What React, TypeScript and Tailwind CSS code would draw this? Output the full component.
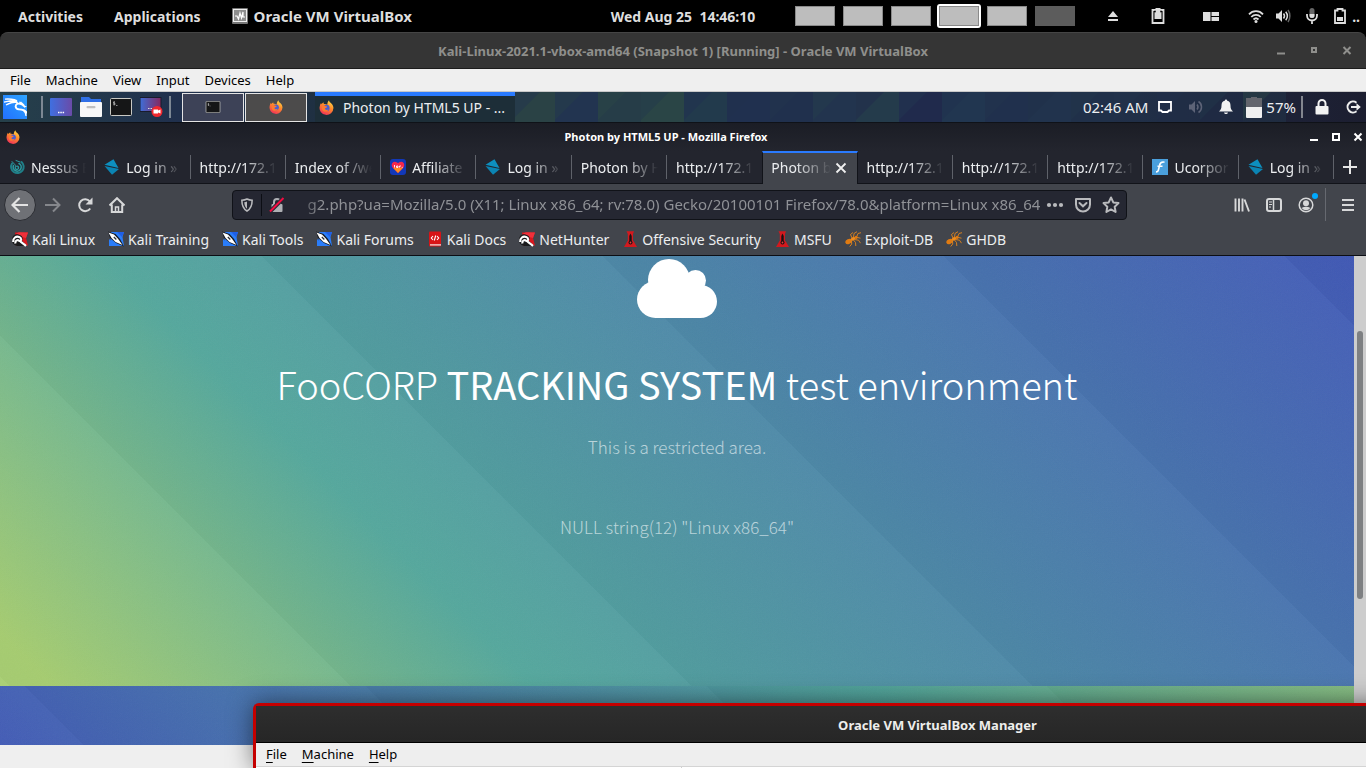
import React from "react";
import { SiKalilinux } from "react-icons/si";

type P = { className?: string };

const Firefox = ({ className = "" }: P) => (
  <svg viewBox="0 0 16 16" className={className} aria-hidden="true">
    <defs>
      <linearGradient id="ffBody" x1="0.8" y1="0" x2="0.3" y2="1">
        <stop offset="0" stopColor="#ffe14a" />
        <stop offset="0.45" stopColor="#ff8a2a" />
        <stop offset="1" stopColor="#f0305a" />
      </linearGradient>
    </defs>
    <path
      d="M15.4 8.6a7.4 7.4 0 1 1-14.6-1.8c.1-1.5.6-2.7 1.4-3.6l.5 1.4C3.4 3.5 4.200 2.800 5 2.500c-.2.6-.1 1.300.3 1.800 1.400-.1 2.600.1 3.500.8.2-1.800.5-3.600 1.900-4.900.2 1.500 1 2.100 2.200 3.200 1.600 1.400 2.500 3.200 2.500 5.200z"
      fill="url(#ffBody)"
    />
    <circle cx="7.900" cy="8.400" r="3.400" fill="#4a5fd0" />
    <path d="M3.200 6c1.500-.6 3-.3 4 .7 1 .1 1.500.4 1.500.9-.6.7-1.900.5-2.500 1.500.3 1.500 2.200 2 3.900 1-1 2.300-3.800 3-5.700 1.500C3 10.300 2.500 8 3.200 6z" fill="#ff7a2f" />
  </svg>
);

const Terminal = ({ className = "" }: P) => (
  <svg viewBox="0 0 22 18" className={className} aria-hidden="true">
    <rect x="0.500" y="0.500" width="21" height="17" rx="1" fill="#151617" stroke="#c9c9c4" />
    <path d="M5 4H3.500v1.300H5v1.400H3.300M4.200 3.300v4M6 7.500h1.500" stroke="#bdbdbd" strokeWidth="0.700" fill="none" />
  </svg>
);

const Diamond = ({ className = "" }: P) => (
  <svg viewBox="0 0 16 16" className={className} aria-hidden="true">
    <path d="M9.500 0.300 14.500 8.900 0.500 5.800z" fill="#0d8fbf" />
    <path d="M0.500 6.900l14.500 3.100L8 15.700z" fill="#0b84b3" />
  </svg>
);

const Nessus = ({ className = "" }: P) => (
  <svg viewBox="0 0 16 16" className={className} fill="none" stroke="#2b9aa0" strokeLinecap="round" aria-hidden="true">
    <path d="M3 4.500a6.300 6.300 0 1 0 9.500-1.500" stroke="#1f7f88" strokeWidth="2" />
    <path d="M4.500 6.500a4 4 0 1 0 5.500-2" strokeWidth="1.600" />
    <path d="M6.500 7.700a1.700 1.700 0 1 0 2-.6" strokeWidth="1.300" />
    <path d="M3 2.500 8.200 8M7 1.500 11 3" strokeWidth="1" />
  </svg>
);

const Affiliate = ({ className = "" }: P) => (
  <svg viewBox="0 0 16 16" className={className} aria-hidden="true">
    <rect width="16" height="16" rx="3" fill="#1238b8" />
    <path d="M8 14 2.500 8.500C1 6.500 1.800 3 4.500 2.700 6 2.500 7.300 3.300 8 4.300c.7-1 2-1.800 3.500-1.600 2.700.3 3.500 3.800 2 5.800z" fill="#f4274b" />
    <path d="M3 8.800h10L8 14z" fill="#ff8b1f" />
    <path d="M4.500 6v2.500M6.500 7h1.500v1.500H6.500zM9.500 8.500V7H11M11.700 8.300h1" stroke="#fff" strokeWidth="0.900" fill="none" />
  </svg>
);

const Ucorpora = ({ className = "" }: P) => (
  <svg viewBox="0 0 16 16" className={className} aria-hidden="true">
    <rect width="16" height="16" fill="#4a9fdc" />
    <path d="M12.500 3.200c-3-.6-4.300.3-4.900 3L6.400 11c-.3 1.500-.9 2-2.400 1.800M5.500 7.300h5" stroke="#fff" strokeWidth="1.600" fill="none" />
  </svg>
);

const KaliRed = ({ className = "" }: P) => (
  <svg viewBox="0 0 16 16" className={className} aria-hidden="true">
    <path d="M3 1.500h13l-2 5.500L16 14.500H4z" fill="#d8181f" />
    <path d="M4 2.500l3-1.200 9 .2-2 5.500-4-1z" fill="#f0303a" />
    <path d="M0 9c0-4 3-6.500 6.500-5.500 4 .7 5 4 3.500 6 1 2 3 3 5 5.500H5C1.500 14 0 12 0 9z" fill="#1a1a1c" />
    <path d="M1.200 11C1 7 4 4.800 7.200 6c2.600 1 2.300 3.600.9 4.200M7.800 10.200c-2-2.300-5-.7-4.300 2.300M8 10c1.700 2 4 3 6 5" stroke="#fff" strokeWidth="2.100" fill="none" />
  </svg>
);

const KaliBlue = ({ className = "" }: P) => (
  <svg viewBox="0 0 16 16" className={className} aria-hidden="true">
    <path d="M3 1h13l-1.500 5L16 15H2z" fill="#2a7dfa" />
    <path d="M9 1h7l-2 5z" fill="#1f5fe8" />
    <path d="M0 0.500l7.500 2.500 4.500 5 4 7.500-8-3.500-6-5z" fill="#15181f" />
    <path d="M0.500 1.500 6 3.500l4 4.200L14.500 14 7.500 11 3.500 7z" fill="#fff" />
    <path d="M5.800 6 8.300 8.500" stroke="#2a3038" strokeWidth="1.200" />
    <path d="M1 8v7h7z" fill="#2a7dfa" />
  </svg>
);

const KaliDocs = ({ className = "" }: P) => (
  <svg viewBox="0 0 16 16" className={className} aria-hidden="true">
    <rect x="2" y="0.500" width="12" height="15" rx="1" fill="#d81417" />
    <rect x="3" y="13.300" width="11" height="1.200" fill="#f3eaea" />
    <path d="M6 5 4.300 7 6 9M10 5l1.700 2L10 9M8.700 4.500 7.300 9.500" stroke="#fff" strokeWidth="1.100" fill="none" />
  </svg>
);

const OffSec = ({ className = "" }: P) => (
  <svg viewBox="0 0 16 16" className={className} aria-hidden="true">
    <path d="M4.500 0.300h7.500L11 3v8H5.800V3z" fill="#d3191e" />
    <path d="M5.500 10h6l3.500 6H2z" fill="#d3191e" />
    <path d="M8.500 2.500 9.700 5v5H7.300V5z" fill="#1c1012" />
    <circle cx="8.500" cy="11.500" r="2" fill="#1c1012" />
    <circle cx="8.500" cy="11.500" r="0.900" fill="#e04040" />
  </svg>
);

const Ant = ({ className = "" }: P) => (
  <svg viewBox="0 0 16 16" className={className} aria-hidden="true">
    <ellipse cx="3.600" cy="10.500" rx="3.400" ry="2.400" transform="rotate(-25 3.600 10.500)" fill="#e07b12" />
    <ellipse cx="8.200" cy="7.800" rx="2.400" ry="1.600" transform="rotate(-25 8.200 7.800)" fill="#f08c1c" />
    <circle cx="11.200" cy="6.300" r="1.600" fill="#e07b12" />
    <path d="M7 7 5.500 3.500 8 1.500M8.500 6.500 9 2.500l3-1.800M12 5l1-2.500 3-.8M12.500 6.500l3 .7M9.500 8.500l4 .7 2 3M8.500 9l2 2.500.3 3.500M6.500 9.500 6.700 13l-2 2.500" stroke="#e5861b" strokeWidth="0.900" fill="none" />
  </svg>
);

type TabData = { label: string; icon?: (p: P) => React.ReactElement; active?: boolean };
const tabs: TabData[] = [
  { label: "Nessus E", icon: Nessus },
  { label: "Log in »", icon: Diamond },
  { label: "http://172.1" },
  { label: "Index of /we" },
  { label: "Affiliate", icon: Affiliate },
  { label: "Log in »", icon: Diamond },
  { label: "Photon by H" },
  { label: "http://172.1" },
  { label: "Photon b", active: true },
  { label: "http://172.1" },
  { label: "http://172.1" },
  { label: "http://172.1" },
  { label: "Ucorpor", icon: Ucorpora },
  { label: "Log in »", icon: Diamond },
];

const bookmarks = [
  { label: "Kali Linux", icon: KaliRed },
  { label: "Kali Training", icon: KaliBlue },
  { label: "Kali Tools", icon: KaliBlue },
  { label: "Kali Forums", icon: KaliBlue },
  { label: "Kali Docs", icon: KaliDocs },
  { label: "NetHunter", icon: KaliRed },
  { label: "Offensive Security", icon: OffSec },
  { label: "MSFU", icon: OffSec },
  { label: "Exploit-DB", icon: Ant },
  { label: "GHDB", icon: Ant },
];

function GnomeBar() {
  return (
    <header className="grid h-8 shrink-0 grid-cols-[1fr_auto_1fr] items-center bg-black text-[14px] font-bold text-[#dedede]">
      <div className="flex items-center gap-[31px] pl-[18px]">
        <button>Activities</button>
        <button>Applications</button>
        <button className="flex items-center gap-1.5 text-[15px] whitespace-nowrap">
          <svg viewBox="0 0 16 16" className="h-4 w-4" aria-hidden="true">
            <rect width="16" height="16" rx="1" fill="#777" />
            <rect x="1.500" y="1.500" width="13" height="12" fill="#8e8e8e" stroke="#eee" />
            <path d="M3 8h2l1.500 3L8 5l1.500 5L11 4v5h2" stroke="#fff" strokeWidth="1.200" fill="none" />
          </svg>
          Oracle VM VirtualBox
        </button>
      </div>
      <time className="whitespace-pre">Wed Aug 25  14:46:10</time>
      <div className="flex items-center pl-10 pr-1.5">
        <div className="flex items-center gap-2">
          {[0, 1, 2, 3, 4, 5].map((n) => (
            <button
              key={n}
              aria-label={"Workspace " + (n + 1)}
              className={
                n === 5
                  ? "h-5 w-10 bg-[#5c5c5c]"
                  : n === 3
                    ? "h-5 w-10 rounded-[1px] border border-[#8a8a8a] bg-[#bdbdbd] outline-2 outline-white"
                    : "h-5 w-10 border border-[#8a8a8a] bg-[#bdbdbd]"
              }
            />
          ))}
        </div>
        <div className="ml-auto flex items-center text-[#dedede]">
          <svg viewBox="0 0 16 16" className="mr-[29px] h-4 w-4" fill="currentColor" aria-label="Eject">
            <path d="M8 3l5 6H3zM3 11h10v2H3z" />
          </svg>
          <svg viewBox="0 0 16 16" className="mr-[37px] h-4 w-4" aria-label="Clipboard">
            <path d="M2.500 2h11v13h-11z" fill="none" stroke="currentColor" strokeWidth="1.800" />
            <path d="M5.500 0h5v4h1v7h-7V4h1z" fill="currentColor" />
            <path d="M5 4.500v-2M11 4.500v-2" stroke="#000" strokeWidth="1" />
          </svg>
          <svg viewBox="0 0 16 16" className="mr-[29px] h-4 w-4" fill="currentColor" aria-label="Layout">
            <path d="M0 4h7.500v9H0zM8.500 4H16v4H8.500zM8.500 9H16v4H8.500z" />
          </svg>
          <svg viewBox="0 0 16 16" className="mr-[11px] h-4 w-4" fill="none" stroke="currentColor" strokeWidth="1.800" aria-label="Wi-Fi">
            <path d="M1 6.300a9.500 9.500 0 0 1 14 0M3.300 9a6.400 6.400 0 0 1 9.400 0M5.500 11.500a3.600 3.600 0 0 1 5 0" />
            <circle cx="8" cy="13.500" r="1.500" fill="currentColor" stroke="none" />
          </svg>
          <svg viewBox="0 0 16 16" className="mr-[13px] h-4 w-4" aria-label="Volume">
            <path d="M1 5.500h2.500L7 2v12l-3.500-3.500H1z" fill="currentColor" />
            <path d="M8.500 5.500c1.200 1.500 1.200 3.500 0 5M10.700 3.800c2 2.500 2 6 0 8.400" stroke="currentColor" strokeWidth="1.500" fill="none" />
            <path d="M13 2c2.500 3.500 2.500 8.500 0 12" stroke="#666" strokeWidth="1.500" fill="none" />
          </svg>
          <svg viewBox="0 0 16 16" className="mr-3 h-4 w-4" aria-label="Microphone">
            <rect x="5.500" y="0" width="5" height="10" rx="2.500" fill="#666" />
            <path d="M5.500 6h5v1.500a2.500 2.500 0 0 1-5 0z" fill="currentColor" />
            <path d="M3 6v1.500a5 5 0 0 0 10 0V6M8 12.500V16" stroke="currentColor" strokeWidth="1.800" fill="none" />
          </svg>
          <svg viewBox="0 0 16 16" className="mr-1 h-4 w-4" aria-label="Battery">
            <path d="M5.500 1h5v1.500H13V15H3V2.500h2.500z" fill="none" stroke="currentColor" strokeWidth="1.800" />
            <path d="M5 9h6v4H5z" fill="currentColor" />
          </svg>
          <span>..</span>
        </div>
      </div>
    </header>
  );
}

function VmTitle() {
  return (
    <div className="flex h-full items-center rounded-t-lg border-b border-t border-t-[#454545] border-b-[#1c1c1c] bg-[#353535] text-[#8f8f8c]">
      <div className="w-[102px]" />
      <h1 className="flex-1 pt-0.5 text-center text-[13px] font-bold">
        Kali-Linux-2021.1-vbox-amd64 (Snapshot 1) [Running] - Oracle VM VirtualBox
      </h1>
      <div className="flex w-[102px] justify-around pr-0.5">
        <button aria-label="Minimize" className="flex h-4 w-4 items-center justify-center">
          <svg viewBox="0 0 10 10" className="h-2.5 w-2.5"><path d="M1 6.500h8v2H1z" fill="currentColor" /></svg>
        </button>
        <button aria-label="Maximize" className="flex h-4 w-4 items-center justify-center">
          <svg viewBox="0 0 10 10" className="h-2.5 w-2.5"><path d="M3 2h4v4H3z" fill="none" stroke="currentColor" strokeWidth="2" /></svg>
        </button>
        <button aria-label="Close" className="flex h-4 w-4 items-center justify-center">
          <svg viewBox="0 0 10 10" className="h-2.5 w-2.5"><path d="M1.500 1 8.500 8M8.500 1 1.500 8" stroke="currentColor" strokeWidth="2" /></svg>
        </button>
      </div>
    </div>
  );
}

const tileFill = ["#2a4245", "#223450", "#263d48", "#2a4546", "#223a4c", "#20304f", "#20304d", "#22344e", "#243b4b", "#202a4c", "#213650", "#20304d", "#21334d", "#203049", "#22364c", "#21344c", "#20304a", "#22354a"];

function PanelPattern() {
  return (
    <svg className="absolute inset-0 -z-10 h-full w-full" viewBox="0 0 1366 30" preserveAspectRatio="none" aria-hidden="true">
      <defs>
        <linearGradient id="panelShade">
          <stop offset="0" stopColor="#26404a" />
          <stop offset="0.130" stopColor="#20304d" />
          <stop offset="0.250" stopColor="#1f3040" />
          <stop offset="0.800" stopColor="#202a46" />
          <stop offset="1" stopColor="#1c1e30" />
        </linearGradient>
      </defs>
      <rect width="1366" height="30" fill="url(#panelShade)" />
      {tileFill.map((c, i) => (
        <g key={i}>
          <rect x={512 + i * 43} width="43" height="30" fill={c} opacity={i > 13 ? 0.5 : 1} />
          <path d={`M${512 + i * 43} 28L${540 + i * 43} 0H${512 + i * 43}z`} fill={tileFill[(i + 1) % 18]} opacity="0.500" />
        </g>
      ))}
    </svg>
  );
}

function KaliPanel() {
  return (
    <div className="relative isolate flex h-full items-center border-b border-[#0f1218] text-[15px] text-[#eceef0]">
      <PanelPattern />
      <button aria-label="Applications menu" className="ml-[3px] flex h-6 w-6 items-center justify-center bg-linear-to-tr from-[#2470ff] to-[#2fa4ff] text-white">
        <SiKalilinux className="h-[23px] w-[23px]" stroke="currentColor" strokeWidth="1.200" />
      </button>
      <span className="ml-[14px] h-[22px] w-0.5 bg-[#7d8894]" />
      <button aria-label="Show desktop" className="ml-[7px]">
        <svg viewBox="0 0 22 18" className="h-[18px] w-[22px]">
          <defs><linearGradient id="desk"><stop stopColor="#3f6fe0" /><stop offset="1" stopColor="#6a4ba8" /></linearGradient></defs>
          <rect width="22" height="18" rx="1" fill="url(#desk)" />
          <path d="M8 14.500h1.500M10.300 14.500h1.500M12.600 14.500h1.500" stroke="#fff" strokeWidth="1.500" />
        </svg>
      </button>
      <button aria-label="Files" className="ml-2">
        <svg viewBox="0 0 22 20" className="h-5 w-[22px]">
          <path d="M1 0h8l2 2h10v8H1z" fill="#2f6fe6" />
          <rect y="5" width="22" height="15" rx="1" fill="#f7f7f7" />
          <rect x="6.500" y="9" width="9" height="2.200" rx="1" fill="#bfbfbf" />
        </svg>
      </button>
      <button aria-label="Terminal" className="ml-2"><Terminal className="h-[18px] w-[22px]" /></button>
      <button aria-label="Screen recorder" className="ml-2">
        <svg viewBox="0 0 23 20" className="h-5 w-[23px]">
          <defs><linearGradient id="rec"><stop stopColor="#3d6ed8" /><stop offset="1" stopColor="#86285f" /></linearGradient></defs>
          <rect width="21" height="14" y="0.500" fill="url(#rec)" stroke="#191c2c" />
          <path d="M8 11.500h6" stroke="#ddd" strokeDasharray="1.500 1" />
          <circle cx="17" cy="14.500" r="5.500" fill="#f0282f" />
          <path d="M13.500 12.500h4.500v1l2.500-1v4l-2.500-1v1h-4.500z" fill="#fff" />
        </svg>
      </button>
      <span className="ml-1.5 h-[22px] w-0.5 bg-[#7d8894]" />
      <button aria-label="Terminal window" className="ml-[11px] flex h-[29px] w-[62px] items-center justify-center border border-[#e4e4e4] bg-[#3d4257]">
        <Terminal className="h-3 w-4" />
      </button>
      <button aria-label="Browser window" className="ml-px flex h-[29px] w-[62px] items-center justify-center border border-[#e4e4e4] bg-[#4c4b4b]">
        <Firefox className="h-3.5 w-3.5" />
      </button>
      <button className="ml-2 flex h-full w-[200px] items-center gap-[9px] border-t-4 border-[#2a7bff] bg-[#1d2e38] pb-1 pl-1 text-[14px]">
        <Firefox className="h-[15px] w-[15px]" />
        <span className="whitespace-nowrap">Photon by HTML5 UP - ...</span>
      </button>
      <div className="ml-auto flex items-center whitespace-nowrap pr-[5px]">
        <time>02:46 AM</time>
        <svg viewBox="0 0 14 14" className="ml-[10px] h-3.5 w-3.5" aria-label="Display"><path d="M1 2h12v8.500h-2L9.500 12h-5L3 10.500H1z" fill="none" stroke="#fff" strokeWidth="1.800" /></svg>
        <svg viewBox="0 0 16 16" className="ml-4 h-4 w-4" aria-label="Muted" fill="none" stroke="#5d6377">
          <path d="M1 5.500h2.500L7 2v12l-3.500-3.500H1z" fill="#5d6377" stroke="none" />
          <path d="M9 5.500c1.200 1.500 1.200 3.500 0 5M10.500 2.500c4 2.500 4 8.500 0 11" strokeWidth="1.500" />
        </svg>
        <svg viewBox="0 0 16 16" className="ml-3.5 h-4 w-4" aria-label="Notifications" fill="#f2f2f2">
          <path d="M8 0.500c.8 0 1.300.6 1.200 1.300C11.500 2.300 12.500 4 12.500 6.500c0 3 .7 4.500 2.500 6H1c1.800-1.500 2.500-3 2.500-6C3.500 4 4.500 2.300 6.800 1.800 6.700 1.100 7.200.5 8 .5zM6 13.500h4c-.5 2-3.500 2-4 0z" />
        </svg>
        <svg viewBox="0 0 16 21" className="ml-3 h-[21px] w-4" aria-label="Battery">
          <path d="M5 0h6v1h5v10H0V1h5z" fill="#63656d" />
          <path d="M0 10h16v10q0 1-1 1H1q-1 0-1-1z" fill="#efefef" />
        </svg>
        <span className="ml-1">57%</span>
        <span className="ml-[5px] h-[22px] w-0.5 bg-[#83868f]" />
        <svg viewBox="0 0 14 16" className="ml-3 h-4 w-3.5" aria-label="Lock">
          <path d="M3.500 8V4.500a3.500 3.500 0 0 1 7 0V8" stroke="#f2f2f2" strokeWidth="2" fill="none" />
          <rect x="0.500" y="7" width="13" height="8.500" rx="1" fill="#f2f2f2" />
        </svg>
        <svg viewBox="0 0 16 16" className="ml-4 h-4 w-4" aria-label="Log out">
          <path d="M11.500 3.700a5.500 5.500 0 1 0 0 8.600" stroke="#eee" strokeWidth="2" fill="none" />
          <path d="M6 7h5.500V4.300L15.800 8l-4.300 3.700V9H6z" fill="#eee" />
        </svg>
      </div>
    </div>
  );
}

function FirefoxTitle() {
  return (
    <div className="flex h-7 shrink-0 items-center bg-linear-to-b from-[#1b1d25] to-[#23252e] text-white">
      <div className="w-[26px] pl-1.5"><Firefox className="h-3.5 w-3.5" /></div>
      <h2 className="flex-1 text-center text-[11px] font-bold">Photon by HTML5 UP - Mozilla Firefox</h2>
      <div className="flex w-[60px] items-center gap-3 pl-[3px]">
        <button aria-label="Minimize window"><svg viewBox="0 0 10 10" className="h-2.5 w-2.5"><path d="M1 7h8v2H1z" fill="#fff" /></svg></button>
        <button aria-label="Maximize window"><svg viewBox="0 0 10 10" className="h-2.5 w-2.5"><path d="M2 2h6v6H2z" fill="none" stroke="#fff" strokeWidth="2" /></svg></button>
        <button aria-label="Close window"><svg viewBox="0 0 10 10" className="h-2.5 w-2.5"><path d="M1.500 1.500l7 7M8.500 1.500l-7 7" stroke="#fff" strokeWidth="2" /></svg></button>
      </div>
    </div>
  );
}

function TabStrip() {
  return (
    <div className="flex h-[33px] shrink-0 bg-[#23252e] text-[14px] text-[#eceef0]">
      <div role="tablist" className="grid min-w-0 flex-1 grid-cols-14">
        {tabs.map((t, i) => {
          const Icon = t.icon;
          return (
            <div
              key={i}
              role="tab"
              aria-selected={!!t.active}
              className={
                t.active
                  ? "flex min-w-0 items-center border-x border-t-2 border-x-[#111319] border-t-[#2a7bff] bg-[#42454c] pr-2.5 pb-0.5 pl-2"
                  : "flex min-w-0 items-center border-b border-[#111319] pl-[9px]"
              }
            >
              {Icon && <Icon className="mr-1.5 h-4 w-4 shrink-0" />}
              <span
                className={
                  t.active
                    ? "min-w-0 flex-1 overflow-hidden whitespace-nowrap mask-[linear-gradient(to_right,black_40%,transparent)]"
                    : "mr-2 min-w-0 flex-1 overflow-hidden whitespace-nowrap mask-[linear-gradient(to_right,black_calc(100%-34px),transparent)]"
                }
              >
                {t.label}
              </span>
              {t.active ? (
                <button aria-label="Close tab" className="ml-1">
                  <svg viewBox="0 0 12 12" className="h-3 w-3"><path d="M1.500 1.500l9 9M10.500 1.500l-9 9" stroke="#f0f0f0" strokeWidth="1.800" /></svg>
                </button>
              ) : (
                i !== 7 && <span className="h-6 w-px bg-[#5f626a]" />
              )}
            </div>
          );
        })}
      </div>
      <button aria-label="New tab" className="flex w-8 items-center justify-center border-b border-[#111319]">
        <svg viewBox="0 0 14 14" className="h-3.5 w-3.5"><path d="M7 0v14M0 7h14" stroke="#e6e6e6" strokeWidth="2" /></svg>
      </button>
    </div>
  );
}

function NavBar() {
  return (
    <div className="flex h-[41px] shrink-0 items-center bg-[#42454c] pr-3 pl-1 text-[#d7d8d9]">
      <button aria-label="Back" className="flex h-8 w-8 items-center justify-center rounded-full border border-[#2b2d33] bg-[#6f7176]">
        <svg viewBox="0 0 18 16" className="h-4 w-[18px]" fill="none" stroke="#e3e3e3" strokeWidth="2.200"><path d="M17 8H2M8.500 1 1.500 8l7 7" /></svg>
      </button>
      <button aria-label="Forward" className="ml-[9px]">
        <svg viewBox="0 0 16 16" className="h-4 w-4" fill="none" stroke="#85878c" strokeWidth="2"><path d="M0 8h14M8 1.500 14.500 8 8 14.500" /></svg>
      </button>
      <button aria-label="Reload" className="ml-4">
        <svg viewBox="0 0 16 16" className="h-4 w-4" fill="none" stroke="currentColor" strokeWidth="2"><path d="M13.200 11.500A6 6 0 1 1 12.800 4.300" /><path d="M15.500 0.500v7h-7z" fill="currentColor" stroke="none" /></svg>
      </button>
      <button aria-label="Home" className="ml-4">
        <svg viewBox="0 0 16 16" className="h-4 w-4" fill="none" stroke="currentColor" strokeWidth="2"><path d="M0.500 8.500 8 1.200l7.500 7.300M2.800 7.500V15h10.400V7.500" /><path d="M6.500 15v-5h3v5" strokeWidth="1.500" /></svg>
      </button>
      <div className="grow-105" />
      <div className="flex h-[30px] grow-867 basis-0 items-center rounded border border-[#101218] bg-[#252732] pr-1.5 pl-2">
        <svg viewBox="0 0 14 16" className="h-3.5 w-3 shrink-0 text-[#b9babd]" aria-label="Tracking protection">
          <path d="M7 1c2 1 4 1.400 6 1.400 0 6-1.500 10-6 12.600C2.500 12.400 1 8.400 1 2.400 3 2.400 5 2 7 1z" fill="none" stroke="currentColor" strokeWidth="1.800" />
          <path d="M7 4v8.500C4.800 10.800 4 8 3.800 4.800 5 4.700 6 4.500 7 4z" fill="currentColor" />
        </svg>
        <span className="ml-2 h-[22px] w-px shrink-0 bg-[#0c0e14]" />
        <svg viewBox="0 0 16 16" className="ml-[7px] h-4 w-4 shrink-0" aria-label="Connection not secure">
          <path d="M5 8V5a3 3 0 0 1 6 0v3" stroke="#aeb0b4" strokeWidth="2" fill="none" />
          <rect x="2.500" y="7" width="11" height="8" rx="1" fill="#aeb0b4" />
          <path d="M1 14.500 14.500 1" stroke="#252732" strokeWidth="4" />
          <path d="M1 14.500 14.500 1" stroke="#f50b41" strokeWidth="2" />
        </svg>
        <label className="sr-only" htmlFor="url">Address</label>
        <input
          id="url"
          readOnly
          className="ml-2 min-w-0 flex-1 bg-transparent text-right text-[15px] text-[#8f9196] outline-none mask-[linear-gradient(to_right,transparent,black_28px)]"
          defaultValue="g2.php?ua=Mozilla/5.0 (X11; Linux x86_64; rv:78.0) Gecko/20100101 Firefox/78.0&platform=Linux x86_64"
        />
        <button aria-label="Page actions" className="ml-1.5">
          <svg viewBox="0 0 18 6" className="h-1.5 w-[18px]" fill="#b9babd"><circle cx="3" cy="3" r="2.100" /><circle cx="9" cy="3" r="2.100" /><circle cx="15" cy="3" r="2.100" /></svg>
        </button>
        <button aria-label="Save to Pocket" className="ml-2.5">
          <svg viewBox="0 0 18 16" className="h-4 w-[18px]" fill="none" stroke="#b9babd" strokeWidth="2"><path d="M2 2h14v5.500a7 7 0 0 1-14 0z" strokeLinejoin="round" /><path d="M5.500 6 9 9.300 12.500 6" strokeLinecap="round" /></svg>
        </button>
        <button aria-label="Bookmark" className="ml-2.5">
          <svg viewBox="0 0 18 17" className="h-[17px] w-[18px]" fill="none" stroke="#b9babd" strokeWidth="2" strokeLinejoin="round"><path d="M9 1.500l2.300 4.900 5.200.7-3.800 3.700.9 5.200L9 13.400 4.400 16l.9-5.200L1.500 7.100l5.200-.7z" /></svg>
        </button>
      </div>
      <div className="grow-105" />
      <button aria-label="Library"><svg viewBox="0 0 16 16" className="h-4 w-4" fill="none" stroke="currentColor" strokeWidth="1.900"><path d="M1.500 1.500v13M5 1.500v13M8.500 1.500v13M10.500 2.500l4.500 12" /></svg></button>
      <button aria-label="Sidebars" className="ml-4"><svg viewBox="0 0 16 16" className="h-4 w-4" fill="none" stroke="currentColor"><rect x="1" y="2" width="14" height="12" rx="2" strokeWidth="2" /><path d="M7.500 2v12" strokeWidth="1.500" /><path d="M3 5h3M3 7.500h3M3 10h2" /></svg></button>
      <button aria-label="Account" className="relative ml-4">
        <svg viewBox="0 0 16 16" className="h-4 w-4" fill="none" stroke="currentColor"><circle cx="8" cy="8" r="6.800" strokeWidth="1.500" /><circle cx="8" cy="6.200" r="3" fill="currentColor" stroke="none" /><path d="M3.500 11q4.500-2.500 9 0-4.500 4.500-9 0z" fill="currentColor" stroke="none" /></svg>
        <span className="absolute -top-1 -right-1 h-1.5 w-1.5 rounded-full bg-[#00aaff]" />
      </button>
      <span className="ml-[11px] h-[33px] w-px bg-[#666970]" />
      <button aria-label="Menu" className="ml-4"><svg viewBox="0 0 12 14" className="h-3.5 w-3" fill="currentColor"><path d="M0 1h12v2H0zM0 6h12v2H0zM0 11h12v2H0z" /></svg></button>
    </div>
  );
}

function Grain({ id }: { id: string }) {
  return (
    <svg className="pointer-events-none absolute inset-0 -z-10 h-full w-full opacity-4" aria-hidden="true">
      <filter id={id}>
        <feTurbulence type="fractalNoise" baseFrequency="0.800" numOctaves="2" />
        <feColorMatrix type="saturate" values="0" />
      </filter>
      <rect width="100%" height="100%" filter={`url(#${id})`} />
    </svg>
  );
}

function WebPage() {
  return (
    <div className="flex shrink-0">
      <main className="min-w-0 flex-1">
        <section className="relative isolate flex flex-col items-center bg-[repeating-linear-gradient(45deg,rgba(0,0,0,0.02)_7px,rgba(255,255,255,0.025)_248px),linear-gradient(45deg,#a8cf72_3%,#54a89d_30%,#4159b7)] pt-[3px] pb-[145px] text-center font-['Noto_Sans_CJK_JP','Noto_Sans',sans-serif] text-white">
          <Grain id="grainTop" />
          <svg viewBox="0 0 80 59" className="h-[59px] w-20" fill="#fff" aria-hidden="true">
            <circle cx="32" cy="21" r="21" />
            <circle cx="58.500" cy="21.500" r="10.500" />
            <circle cx="18.500" cy="40.500" r="18.500" />
            <circle cx="63.500" cy="42.500" r="16.500" />
            <path d="M18 20h46v39H18z" />
          </svg>
          <h2 className="mt-[38px] text-[38px] leading-14 font-light">
            FooCORP <strong className="font-normal">TRACKING SYSTEM</strong> test environment
          </h2>
          <p className="mt-[21px] text-[17px] leading-7 font-light text-white/60">This is a restricted area.</p>
          <p className="mt-[52px] text-[17px] leading-7 font-light text-white/60">NULL string(12) "Linux x86_64"</p>
        </section>
        <section className="relative isolate h-[59px] bg-[repeating-linear-gradient(45deg,rgba(0,0,0,0.02)_59px,rgba(255,255,255,0.015)_300px),linear-gradient(45deg,#425bb6,#4fa49a_66%,#84bc80)]">
          <Grain id="grainBottom" />
        </section>
      </main>
      <div className="flex w-3 justify-center bg-[#cdcdcd] pt-[75px]">
        <div className="h-[268px] w-1.5 rounded-full bg-[#7e8082]" />
      </div>
    </div>
  );
}

function ManagerWindow() {
  return (
    <div className="absolute top-[703px] bottom-0 left-[253px] flex w-full flex-col rounded-tl-md border-t-3 border-l-3 border-[#c40000] bg-[#2c2c2c] shadow-[0_0_24px_rgba(0,0,0,0.5)]">
      <div className="flex h-[37px] shrink-0 items-center justify-center border-b border-black bg-linear-to-b from-[#2e2e2e] to-[#262626] pt-1 text-[13px] font-bold text-[#eeeeec]">
        Oracle VM VirtualBox Manager
      </div>
      <nav className="flex h-6 shrink-0 items-center gap-[15px] border-b border-[#d4d4d4] bg-[#eee] pl-[10px] text-[13px] text-black">
        {["File", "Machine", "Help"].map((m) => (
          <button key={m}>
            <span className="underline underline-offset-3">{m[0]}</span>
            {m.slice(1)}
          </button>
        ))}
      </nav>
      <div className="flex flex-1 bg-white">
        <div className="w-[426px] border-r border-[#d0d0d0]" />
      </div>
    </div>
  );
}

export default function App() {
  return (
    <div className="relative flex h-screen min-w-[1024px] flex-col overflow-hidden bg-[#efefef] font-['Noto_Sans',sans-serif]">
      <GnomeBar />
      <div className="h-[37px] shrink-0 bg-black"><VmTitle /></div>
      <nav className="flex h-[23px] shrink-0 items-center gap-[15px] border-b border-[#c8c8c8] bg-[#efefef] pt-0.5 pl-2.5 text-[13px] text-black">
        {["File", "Machine", "View", "Input", "Devices", "Help"].map((m) => (
          <button key={m}>{m}</button>
        ))}
      </nav>
      <div className="h-[31px] shrink-0"><KaliPanel /></div>
      <FirefoxTitle />
      <TabStrip />
      <NavBar />
      <nav className="flex h-[31px] shrink-0 items-center gap-[13px] border-b border-[#0c0e14] bg-[#42454c] pb-0.5 pl-3 text-[14px] text-[#eceef0]">
        {bookmarks.map(({ label, icon: Icon }) => (
          <a key={label} href="#" className="flex items-center gap-1 whitespace-nowrap">
            <Icon className="h-4 w-4" />
            {label}
          </a>
        ))}
      </nav>
      <WebPage />
      <ManagerWindow />
    </div>
  );
}
